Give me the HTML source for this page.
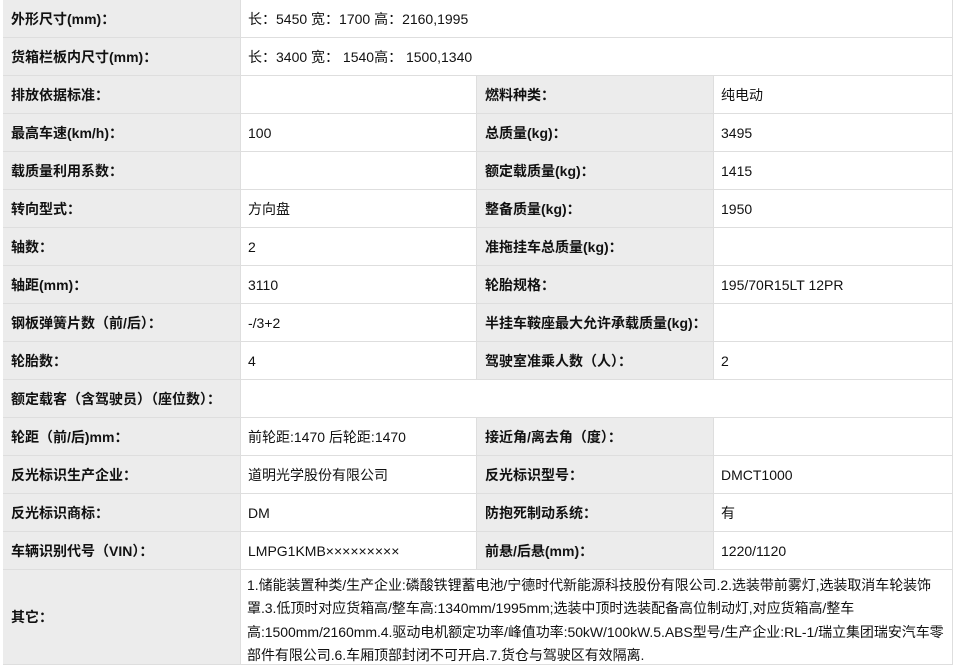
<!DOCTYPE html>
<html><head><meta charset="utf-8"><style>
body{margin:0;width:955px;height:659px;overflow:hidden;background:#fff;font-family:"Liberation Sans","Noto Sans CJK SC",sans-serif;font-size:14px;color:#111}
.c{position:absolute;box-sizing:border-box;border-bottom:1px solid #dedede;border-right:1px solid #dedede;padding-left:7px;display:flex;align-items:center;white-space:nowrap}
.g{background:#ececec;font-weight:bold;padding-left:8px}
</style></head><body>
<div id="t"></div>
<script>
var rows=[
["外形尺寸(mm)：","长：5450 宽：1700 高：2160,1995"],
["货箱栏板内尺寸(mm)：","长：3400 宽： 1540高： 1500,1340"],
["排放依据标准：","","燃料种类：","纯电动"],
["最高车速(km/h)：","100","总质量(kg)：","3495"],
["载质量利用系数：","","额定载质量(kg)：","1415"],
["转向型式：","方向盘","整备质量(kg)：","1950"],
["轴数：","2","准拖挂车总质量(kg)：",""],
["轴距(mm)：","3110","轮胎规格：","195/70R15LT 12PR"],
["钢板弹簧片数（前/后）：","-/3+2","半挂车鞍座最大允许承载质量(kg)：",""],
["轮胎数：","4","驾驶室准乘人数（人）：","2"],
["额定载客（含驾驶员）（座位数）：",""],
["轮距（前/后)mm：","前轮距:1470 后轮距:1470","接近角/离去角（度）：",""],
["反光标识生产企业：","道明光学股份有限公司","反光标识型号：","DMCT1000"],
["反光标识商标：","DM","防抱死制动系统：","有"],
["车辆识别代号（VIN）：","LMPG1KMB×××××××××","前悬/后悬(mm)：","1220/1120"]];
var h='';
rows.forEach(function(r,i){var y=i*38;
h+='<div class="c g" style="left:3px;top:'+y+'px;width:238px;height:38px">'+r[0]+'</div>';
if(r.length==2){h+='<div class="c" style="left:241px;top:'+y+'px;width:712px;height:38px">'+r[1]+'</div>';}
else{h+='<div class="c" style="left:241px;top:'+y+'px;width:236px;height:38px">'+r[1]+'</div>';
h+='<div class="c g" style="left:477px;top:'+y+'px;width:237px;height:38px">'+r[2]+'</div>';
h+='<div class="c" style="left:714px;top:'+y+'px;width:239px;height:38px">'+r[3]+'</div>';}
});
h+='<div class="c g" style="left:3px;top:570px;width:238px;height:95px">其它：</div>';
h+='<div class="c" style="left:241px;top:570px;width:712px;height:95px;white-space:normal;line-height:23.4px;align-items:flex-start;padding-top:4px;padding-left:6px;padding-right:2px;letter-spacing:-0.05px">1.储能装置种类/生产企业:磷酸铁锂蓄电池/宁德时代新能源科技股份有限公司.2.选装带前雾灯,选装取消车轮装饰罩.3.低顶时对应货箱高/整车高:1340mm/1995mm;选装中顶时选装配备高位制动灯,对应货箱高/整车高:1500mm/2160mm.4.驱动电机额定功率/峰值功率:50kW/100kW.5.ABS型号/生产企业:RL-1/瑞立集团瑞安汽车零部件有限公司.6.车厢顶部封闭不可开启.7.货仓与驾驶区有效隔离.</div>';
document.getElementById('t').innerHTML=h;
</script>
</body></html>
